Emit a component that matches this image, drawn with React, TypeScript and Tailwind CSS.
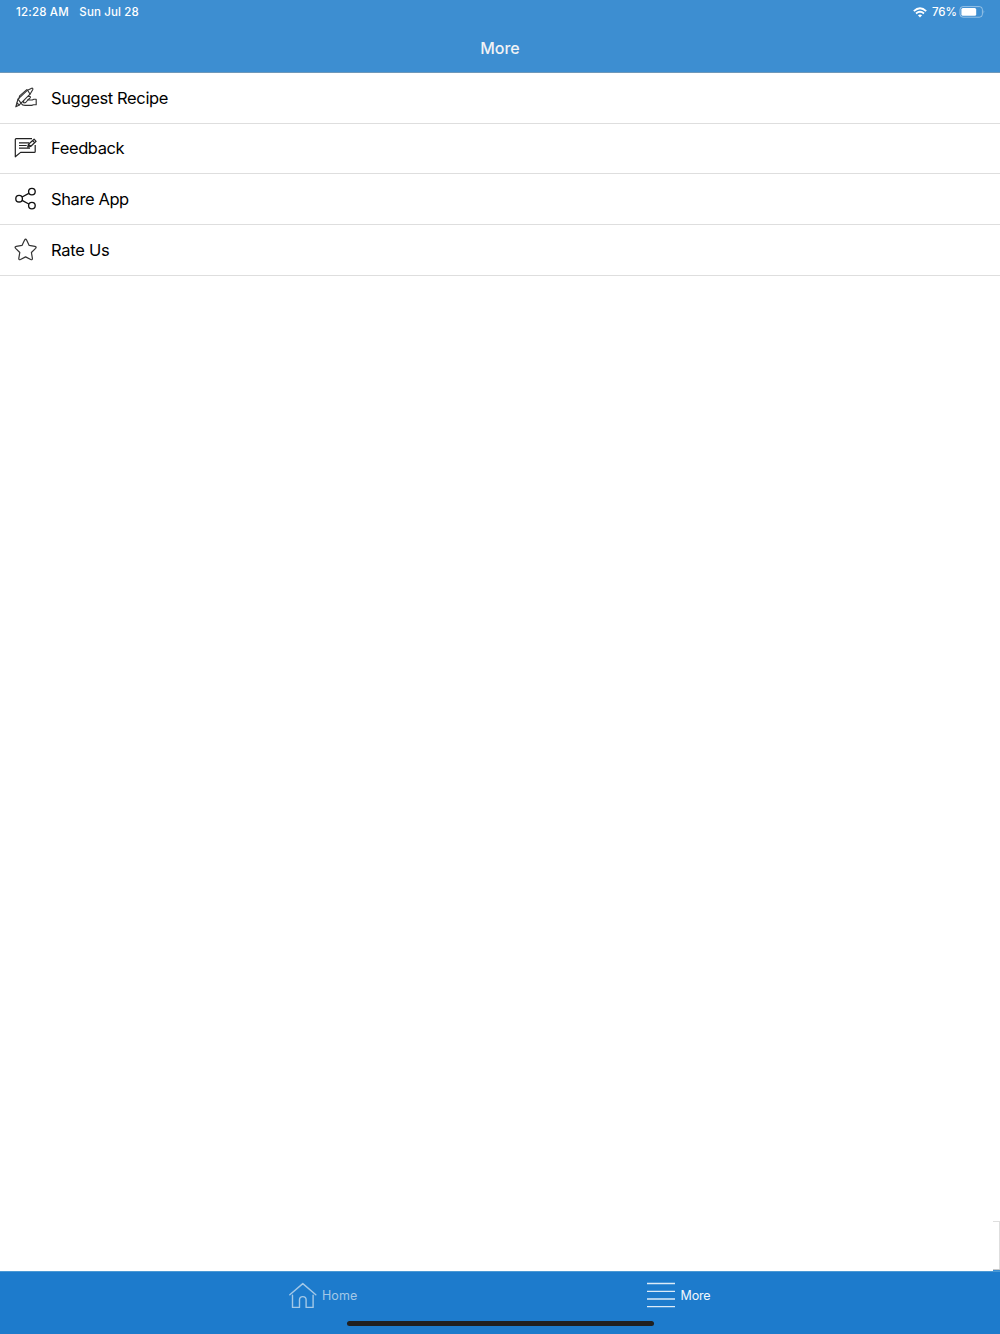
import React from "react";

const MENU_ITEMS = [
  { label: "Suggest Recipe", icon: WriteIcon, tracking: "tracking-[-0.36px]" },
  { label: "Feedback", icon: FeedbackIcon, tracking: "tracking-[-0.4px]" },
  { label: "Share App", icon: ShareIcon, tracking: "tracking-[-0.4px]" },
  { label: "Rate Us", icon: StarIcon, tracking: "tracking-[-0.28px]" },
];

function WriteIcon() {
  return (
    <svg viewBox="0 0.8 24 24" className="h-6 w-6" fill="none" stroke="#333" strokeWidth="1.15" strokeLinecap="round" strokeLinejoin="round">
      <path d="m1.8 21.6 1.1-3.8 2.4 1.9-3.5 1.9Z" />
      <path d="M2.9 17.8 4 14 13.6 5l4.1-2q1.6-.2 1 1.5l-2.4 4.1-9 9-2 2.1" />
      <path d="m4 14 2.8 3.7M13.6 5l2.4 3.8M5.1 12.9l.5-2.2 7.2-6.3" />
      <path d="m14.4 11.2 1.2-.2q1.5.7.3 1.9l-2.1 1.9h4.4l1.7-.8h2.3v5.5h-2.7l-1.8.7H11q-2.8 0-3.5-1.7" />
      <path d="M9.8 15.8q-1.2 1.7.5 1.8 1.7.1 3.5-2.8" />
    </svg>
  );
}

function FeedbackIcon() {
  return (
    <svg viewBox="0 0 24 24" className="h-6 w-6" fill="none" stroke="#222" strokeWidth="1.2" strokeLinejoin="round">
      <path d="M18 2.6H2.2q-.9 0-.9.9v17.3l5.3-4.4h13.6q1 0 1-1V9" />
      <path d="M5 6.8h10M5 9.5h7.7M5 12.2h11" />
      <path d="m13.7 11.2.8-3 5.6-5 2 2.1-5.5 5.2-2.9.7ZM18.5 4.6l2 2.1M14.5 8.2l2.1 2.3" />
    </svg>
  );
}

function ShareIcon() {
  return (
    <svg viewBox="0 0 24 24" className="h-6 w-6" fill="none" stroke="#111" strokeWidth="1.35">
      <circle cx="5.1" cy="11.7" r="3.3" />
      <circle cx="17.9" cy="4.6" r="3.3" />
      <circle cx="17.9" cy="18.6" r="3.3" />
      <path d="m8.1 10 6.7-3.7M8.1 13.4l6.7 3.6" />
    </svg>
  );
}

function StarIcon() {
  return (
    <svg viewBox="0 0.8 24 24" className="h-6 w-6" fill="none" stroke="#333" strokeWidth="1.2" strokeLinejoin="round">
      <path d="M10.6 2.9q1-1.8 2 0l2.6 5.3 5.7.9q2 .5.7 2l-4.2 4.2 1 5.8q.1 2-1.7 1.2l-5.1-2.6-5.1 2.6q-1.8.8-1.7-1.2l1-5.8-4.2-4.2q-1.3-1.5.7-2l5.7-.9Z" />
    </svg>
  );
}

function WifiIcon() {
  return (
    <svg viewBox="0 0 14 11" className="h-[11px] w-[14px]" fill="none" stroke="white" strokeWidth="1.8">
      <path d="M.8 4.1Q7-1.6 13.2 4.1M3 6.5q4-3.5 8 0" />
      <path d="M4.9 8.3Q7 6.6 9.1 8.3L7 10.5Z" fill="white" stroke="none" />
    </svg>
  );
}

function BatteryIcon() {
  return (
    <svg viewBox="0 0 26 12" className="h-3 w-[26px]">
      <rect x="1" y=".6" width="22.4" height="10.6" rx="3" fill="none" stroke="white" strokeOpacity=".45" />
      <rect x="2.4" y="2.1" width="14.8" height="7.7" rx="1.5" fill="white" />
      <path d="M24.6 4.1q1.4 1.8 0 3.7Z" fill="white" fillOpacity=".5" />
    </svg>
  );
}

export default function App() {
  return (
    <div className="flex h-[1334px] w-[1000px] flex-col overflow-hidden bg-white font-['Inter',sans-serif]">
      <header className="h-[73px] shrink-0 border-b border-[#6f98b9] bg-[#3d8ed1] text-white">
        {/* Status bar */}
        <div className="flex h-6 items-center justify-between pr-[15px] pl-4 text-[11.5px] font-medium">
          <div className="flex gap-[10.5px] pt-px">
            <span className="tracking-[0.18px]">12:28 AM</span>
            <span className="tracking-[0.14px]">Sun Jul 28</span>
          </div>
          <div className="flex items-center">
            <WifiIcon />
            <span className="ml-[5px] w-[27px] pt-px tracking-[-0.1px]">76%</span>
            <BatteryIcon />
          </div>
        </div>
        <h1 className="flex h-12 items-center justify-center text-[16px] font-medium text-[#f1f3f5]">More</h1>
      </header>

      <main className="flex flex-1 flex-col">
        {MENU_ITEMS.map(({ label, icon: Icon, tracking }) => (
          <button key={label} className="flex h-[50.7px] items-center border-b border-[#dedede] pb-[0.5px] pl-[13.5px]">
            <Icon />
            <span className={`ml-[13.5px] pt-[0.6px] text-[16.5px] text-black ${tracking}`}>{label}</span>
          </button>
        ))}
        {/* Edge of the panel sitting off the right side */}
        <div className="mt-auto flex h-[50px] w-[7px] flex-col self-end border-t border-r border-[#dedede]">
          <div className="mt-auto h-0.5 w-[7px] border-t border-[#c8c8c8] bg-[#3d8ed1]" />
        </div>
      </main>

      {/* Tab bar */}
      <footer className="flex h-[63px] shrink-0 flex-col bg-[#1d7bcc]">
        <div className="h-px shrink-0 bg-[#4b99d4]" />
        <nav className="flex h-[47px] items-center pl-[289px] text-[12.5px]">
          <button className="flex w-[358px] items-center text-[#a3c8e7]">
            <svg viewBox="0 0 28 28" className="h-7 w-7" fill="none" stroke="currentColor" strokeWidth="1.4" strokeLinecap="round" strokeLinejoin="round">
              <path d="M.8 12.8 13.8 1.6l13 11.2M3.5 13.2v12.2h7v-7.6q0-3.2 3.3-3.2t3.3 3.2v7.6h7V13.2" />
            </svg>
            <span className="ml-[5px] pt-px tracking-[0.05px]">Home</span>
          </button>
          <button className="flex items-center text-[#f1f7fd]">
            <svg viewBox="0 0 28 28" className="h-7 w-7" fill="none" stroke="#dcebf8" strokeWidth="1.3">
              <path d="M0 1.5h28M0 9.3h28M0 17h28M0 24.7h28" />
            </svg>
            <span className="ml-[5.5px] pt-px tracking-[-0.15px]">More</span>
          </button>
        </nav>
        <div className="mt-[2px] h-[5px] w-[307px] self-center rounded-full bg-[#202020]" />
      </footer>
    </div>
  );
}
